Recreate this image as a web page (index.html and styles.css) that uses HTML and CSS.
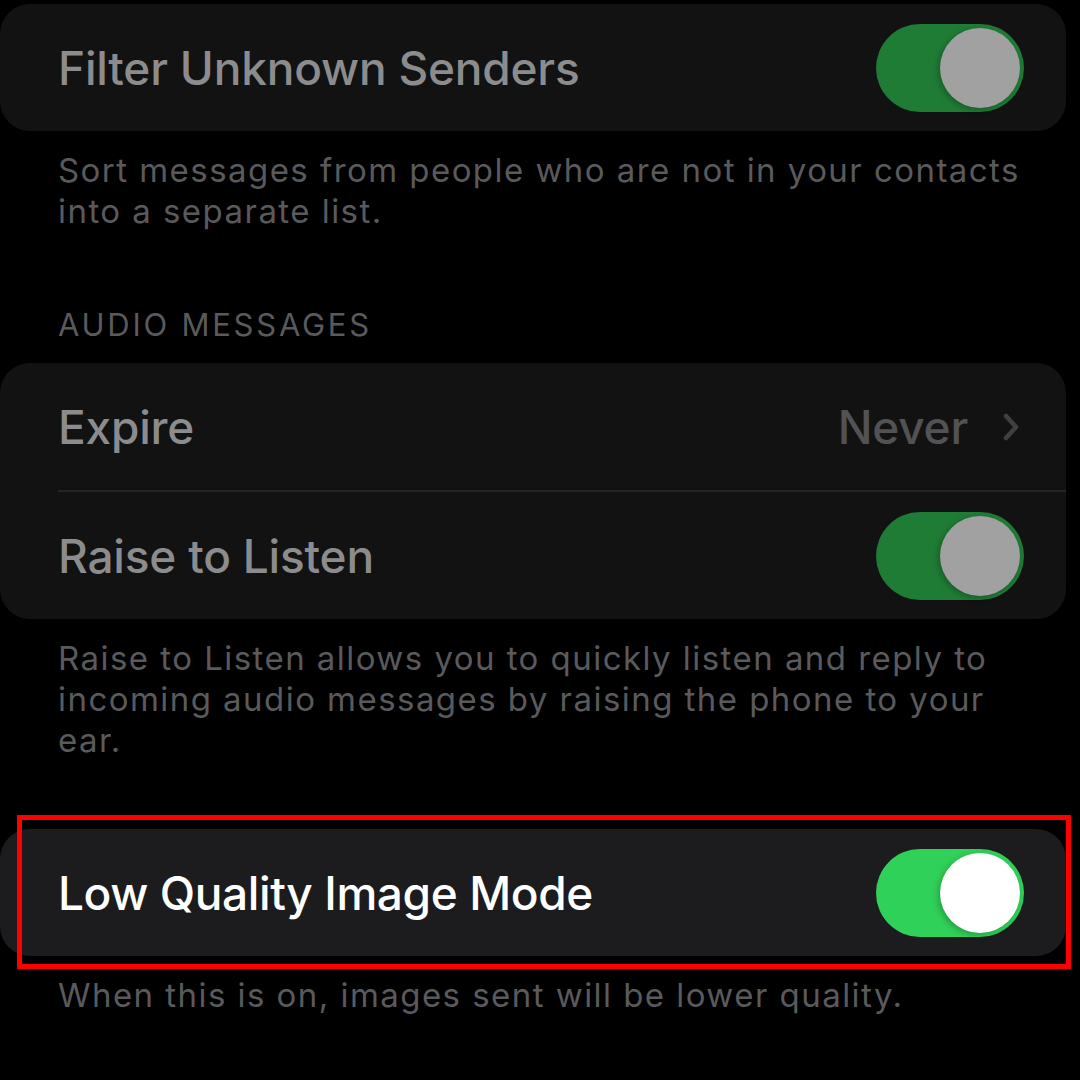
FILE: index.html
```html
<!DOCTYPE html>
<html lang="en">
<head>
    <meta charset="UTF-8">
    <meta name="viewport" content="width=device-width, initial-scale=1.0">
    <title>Messages Settings</title>
    <link rel="stylesheet" href="styles.css">
</head>
<body>
    <div class="settings">
        <div class="card dim">
            <div class="row">
                <span class="label">Filter Unknown Senders</span>
                <div class="toggle on"><div class="knob"></div></div>
            </div>
        </div>
        <p class="footer">Sort messages from people who are not in your contacts into a separate list.</p>

        <p class="header">AUDIO MESSAGES</p>
        <div class="card dim">
            <div class="row">
                <span class="label">Expire</span>
                <div class="value">
                    <span>Never</span>
                    <svg class="chevron" width="18" height="30" viewBox="0 0 18 30">
                        <polyline points="4,4 14,15 4,26" fill="none" stroke="currentColor" stroke-width="4.5" stroke-linecap="round" stroke-linejoin="round"/>
                    </svg>
                </div>
            </div>
            <div class="separator"></div>
            <div class="row">
                <span class="label">Raise to Listen</span>
                <div class="toggle on"><div class="knob"></div></div>
            </div>
        </div>
        <p class="footer">Raise to Listen allows you to quickly listen and reply to incoming audio messages by raising the phone to your ear.</p>

        <div class="card lit">
            <div class="row">
                <span class="label">Low Quality Image Mode</span>
                <div class="toggle on"><div class="knob"></div></div>
            </div>
            <div class="highlight"></div>
        </div>
        <p class="footer">When this is on, images sent will be lower quality.</p>
    </div>
</body>
</html>
```

FILE: styles.css
```css
* {
    margin: 0;
    padding: 0;
    box-sizing: border-box;
    font-family: "Inter", "Noto Sans", sans-serif;
}

body {
    width: 1080px;
    height: 1080px;
    background: #000;
    overflow: hidden;
}

.settings {
    display: flex;
    flex-direction: column;
    padding-top: 4px;
    width: 1066px;
}

.card {
    position: relative;
    border-radius: 30px;
}

.card.dim {
    background: #121213;
}

.card.lit {
    background: #1c1c1e;
    margin-top: 68px;
}

.row {
    height: 127px;
    display: flex;
    align-items: center;
    justify-content: space-between;
    padding: 0 42px 0 58px;
}

.label {
    font-size: 46px;
    font-weight: 500;
    letter-spacing: -0.2px;
}

.dim .label {
    color: #8c8c8e;
}

.lit .label {
    color: #ffffff;
}

.lit .label {
    letter-spacing: -0.4px;
}

.separator {
    height: 2px;
    margin-left: 58px;
    background: #242426;
}

.value {
    display: flex;
    align-items: center;
    gap: 34px;
    color: #525255;
    font-size: 46px;
    font-weight: 500;
    letter-spacing: -0.2px;
    padding-right: 4px;
}

.chevron {
    color: #404043;
}

.toggle {
    width: 148px;
    height: 88px;
    border-radius: 44px;
    padding: 4px;
    display: flex;
    justify-content: flex-end;
    align-items: center;
}

.dim .toggle {
    background: #1f7c35;
}

.lit .toggle {
    background: #30d158;
}

.knob {
    width: 80px;
    height: 80px;
    border-radius: 50%;
    box-shadow: -2px 2px 6px rgba(0, 0, 0, 0.25);
}

.dim .knob {
    background: #a1a1a1;
}

.lit .knob {
    background: #ffffff;
}

.footer {
    color: #5a5a5c;
    font-size: 33px;
    line-height: 41px;
    padding: 0 30px 0 58px;
    margin-top: 19px;
    letter-spacing: 1.45px;
}

.header {
    color: #5a5a5c;
    font-size: 31px;
    line-height: 40px;
    padding-left: 58px;
    margin-top: 73px;
    margin-bottom: 18px;
    letter-spacing: 2.75px;
}

.highlight {
    position: absolute;
    top: -14px;
    bottom: -13px;
    left: 17px;
    right: -5px;
    border: 5px solid #ff0000;
}
```
